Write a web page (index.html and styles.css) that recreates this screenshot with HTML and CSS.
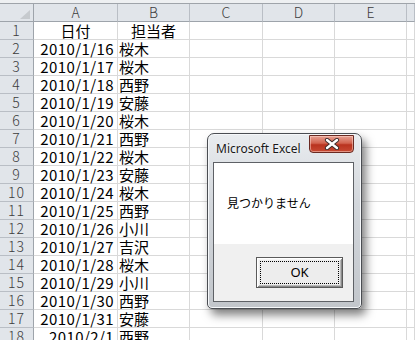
FILE: index.html
```html
<!DOCTYPE html>
<html lang="ja">
<head>
<meta charset="utf-8">
<link rel="stylesheet" href="styles.css">
</head>
<body>
<div class="app">
  <div class="topband"></div>
  <div class="sheet">
    <div class="hd corner"><span class="tri"></span></div>
    <div class="hd col">A</div>
    <div class="hd col">B</div>
    <div class="hd col">C</div>
    <div class="hd col">D</div>
    <div class="hd col">E</div>
    <div class="hd col last"></div>

    <div class="hd row">1</div><div class="c ctr">日付</div><div class="c ctr">担当者</div><div class="c"></div><div class="c"></div><div class="c"></div><div class="c"></div>
    <div class="hd row">2</div><div class="c num">2010/1/16</div><div class="c txt">桜木</div><div class="c"></div><div class="c"></div><div class="c"></div><div class="c"></div>
    <div class="hd row">3</div><div class="c num">2010/1/17</div><div class="c txt">桜木</div><div class="c"></div><div class="c"></div><div class="c"></div><div class="c"></div>
    <div class="hd row">4</div><div class="c num">2010/1/18</div><div class="c txt">西野</div><div class="c"></div><div class="c"></div><div class="c"></div><div class="c"></div>
    <div class="hd row">5</div><div class="c num">2010/1/19</div><div class="c txt">安藤</div><div class="c"></div><div class="c"></div><div class="c"></div><div class="c"></div>
    <div class="hd row">6</div><div class="c num">2010/1/20</div><div class="c txt">桜木</div><div class="c"></div><div class="c"></div><div class="c"></div><div class="c"></div>
    <div class="hd row">7</div><div class="c num">2010/1/21</div><div class="c txt">西野</div><div class="c"></div><div class="c"></div><div class="c"></div><div class="c"></div>
    <div class="hd row">8</div><div class="c num">2010/1/22</div><div class="c txt">桜木</div><div class="c"></div><div class="c"></div><div class="c"></div><div class="c"></div>
    <div class="hd row">9</div><div class="c num">2010/1/23</div><div class="c txt">安藤</div><div class="c"></div><div class="c"></div><div class="c"></div><div class="c"></div>
    <div class="hd row">10</div><div class="c num">2010/1/24</div><div class="c txt">桜木</div><div class="c"></div><div class="c"></div><div class="c"></div><div class="c"></div>
    <div class="hd row">11</div><div class="c num">2010/1/25</div><div class="c txt">西野</div><div class="c"></div><div class="c"></div><div class="c"></div><div class="c"></div>
    <div class="hd row">12</div><div class="c num">2010/1/26</div><div class="c txt">小川</div><div class="c"></div><div class="c"></div><div class="c"></div><div class="c"></div>
    <div class="hd row">13</div><div class="c num">2010/1/27</div><div class="c txt">吉沢</div><div class="c"></div><div class="c"></div><div class="c"></div><div class="c"></div>
    <div class="hd row">14</div><div class="c num">2010/1/28</div><div class="c txt">桜木</div><div class="c"></div><div class="c"></div><div class="c"></div><div class="c"></div>
    <div class="hd row">15</div><div class="c num">2010/1/29</div><div class="c txt">小川</div><div class="c"></div><div class="c"></div><div class="c"></div><div class="c"></div>
    <div class="hd row">16</div><div class="c num">2010/1/30</div><div class="c txt">西野</div><div class="c"></div><div class="c"></div><div class="c"></div><div class="c"></div>
    <div class="hd row">17</div><div class="c num">2010/1/31</div><div class="c txt">安藤</div><div class="c"></div><div class="c"></div><div class="c"></div><div class="c"></div>
    <div class="hd row">18</div><div class="c num">2010/2/1</div><div class="c txt">西野</div><div class="c"></div><div class="c"></div><div class="c"></div><div class="c"></div>
  </div>

  <div class="dialog">
    <div class="titlebar">
      <span class="title">Microsoft Excel</span>
      <button class="close" aria-label="閉じる">
        <svg width="16" height="12" viewBox="0 0 16 12">
          <path d="M3 2 L13 10 M13 2 L3 10" stroke="#3a2a2a" stroke-width="4.2" stroke-linecap="round" fill="none"/>
          <path d="M3 2 L13 10 M13 2 L3 10" stroke="#ffffff" stroke-width="2.4" stroke-linecap="round" fill="none"/>
        </svg>
      </button>
    </div>
    <div class="client">
      <div class="msgarea">見つかりません</div>
      <div class="btnarea">
        <button class="ok"><span class="focus">OK</span></button>
      </div>
    </div>
  </div>
</div>
</body>
</html>
```

FILE: styles.css
```css
* { box-sizing: border-box; }
html, body { margin: 0; padding: 0; background: #ffffff; }
.app {
  position: relative;
  width: 415px;
  height: 340px;
  overflow: hidden;
  font-family: "Noto Sans CJK JP", sans-serif;
}
.topband {
  height: 4px;
  background: #eef0f2;
  border-bottom: 1px solid #9fa4aa;
}
.sheet {
  display: grid;
  grid-template-columns: 34px 84px 72px 73px 72px 72px 1fr;
  grid-auto-rows: 18px;
}
.hd {
  background: #e1e5ea;
  border-right: 1px solid #b9bec5;
  border-bottom: 1px solid #b9bec5;
  color: #3c3c3c;
  font-size: 14px;
  line-height: 17px;
  text-align: center;
  font-weight: 300;
}
.hd.col { border-bottom-color: #9ea4ab; }
.hd.row { border-right-color: #9ea4ab; letter-spacing: 1px; }
.hd.corner {
  border-right-color: #9ea4ab;
  border-bottom-color: #9ea4ab;
  display: flex;
  justify-content: flex-end;
  align-items: flex-end;
  padding: 0 3px 2px 0;
}
.tri {
  width: 10px;
  height: 9px;
  background: #c6cace;
  clip-path: polygon(100% 0, 100% 100%, 0 100%);
}
.c {
  border-right: 1px solid #d9d9d9;
  border-bottom: 1px solid #d9d9d9;
  font-size: 15px;
  line-height: 17px;
  color: #000;
  white-space: nowrap;
}
.c.num { text-align: right; padding-right: 3px; letter-spacing: 0.4px; }
.c.txt { padding-left: 1px; }
.c.ctr { text-align: center; }

.dialog {
  position: absolute;
  left: 207px;
  top: 133px;
  width: 155px;
  height: 176px;
  border: 1px solid #4a4d52;
  border-radius: 7px 7px 5px 5px;
  background: linear-gradient(#e9ecef, #d3d7dc 40%, #c2c6cb);
  box-shadow: inset 0 0 0 1px #f6f8fa, 4px 6px 10px rgba(0,0,0,0.5);
  padding: 0 7px 6px 5px;
  display: flex;
  flex-direction: column;
}
.titlebar {
  position: relative;
  height: 28px;
  flex: none;
}
.title {
  position: absolute;
  left: 3px;
  top: 8px;
  font-family: "Noto Sans", sans-serif;
  font-size: 12px;
  line-height: 14px;
  color: #1a1a1a;
  text-shadow: 0 0 3px rgba(255,255,255,0.9);
}
.close {
  position: absolute;
  right: 0;
  top: 1px;
  width: 45px;
  height: 18px;
  padding: 0;
  border: 1px solid #6a2a22;
  border-radius: 0 0 4px 4px;
  background: linear-gradient(#e7a193 0%, #d2634f 45%, #b9331f 55%, #c84a34 100%);
  box-shadow: inset 0 0 0 1px rgba(255,220,210,0.5);
  display: flex;
  align-items: center;
  justify-content: center;
}
.client {
  flex: 1;
  border: 1px solid #5e6166;
  display: flex;
  flex-direction: column;
  background: #f0f0f0;
}
.msgarea {
  height: 81px;
  background: #ffffff;
  padding: 33px 0 0 13px;
  font-size: 12px;
  line-height: 14px;
  color: #000;
}
.btnarea {
  flex: 1;
  display: flex;
  justify-content: flex-end;
  align-items: flex-start;
  padding: 13px 10px 0 0;
}
.ok {
  width: 87px;
  height: 31px;
  padding: 3px;
  border: 1px solid #5a5a5a;
  background: #ededed;
  box-shadow: inset 1px 1px 0 #ffffff, inset -1px -1px 0 #8a8a8a, inset 2px 2px 0 #f6f6f6, inset -2px -2px 0 #b8b8b8;
  display: flex;
}
.focus {
  flex: 1;
  border: 1px dotted #000;
  font-family: "Noto Sans", sans-serif;
  font-size: 13px;
  line-height: 21px;
  color: #000;
  text-align: center;
}
```
